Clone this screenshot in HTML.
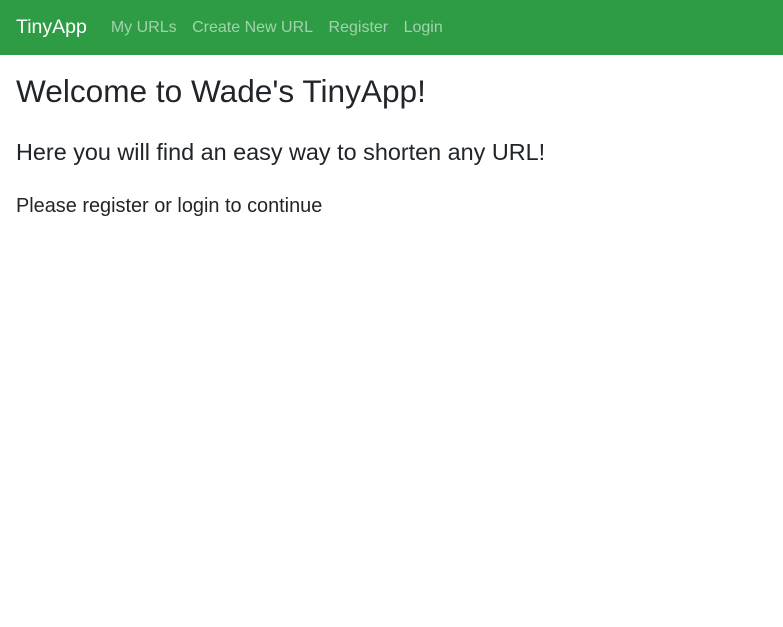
<!DOCTYPE html>
<html><head><meta charset="utf-8"><style>
body{margin:0;font-family:"Liberation Sans",sans-serif;color:#212529;background:#fff;width:783px;height:627px;overflow:hidden}
nav{background:#2e9c45;height:55px;display:flex;align-items:center;padding:0 16px;box-sizing:border-box}
.brand{color:#fff;font-size:19.5px;margin-right:24px}
nav a.l{color:rgba(255,255,255,.55);font-size:16px;margin-right:15.5px;text-decoration:none}
h1{font-size:31.6px;font-weight:500;margin:18px 16px 0;line-height:1.2}
h3{font-size:23.4px;font-weight:500;margin:27px 16px 0;line-height:1.2}
h5{font-size:19.9px;font-weight:500;margin:29px 16px 0;line-height:1.2}
</style></head><body>
<nav><span class="brand">TinyApp</span><a class="l">My URLs</a><a class="l">Create New URL</a><a class="l">Register</a><a class="l">Login</a></nav>
<h1>Welcome to Wade's TinyApp!</h1>
<h3>Here you will find an easy way to shorten any URL!</h3>
<h5>Please register or login to continue</h5>
</body></html>
